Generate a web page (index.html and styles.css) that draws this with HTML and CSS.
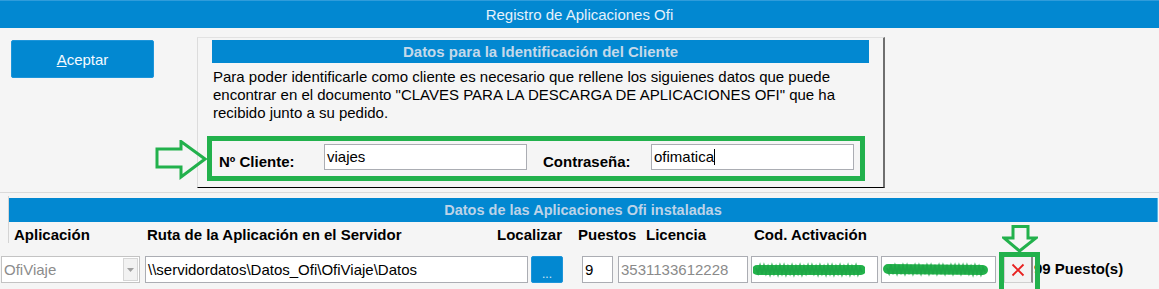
FILE: index.html
```html
<!DOCTYPE html>
<html lang="es">
<head>
<meta charset="utf-8">
<title>Registro de Aplicaciones Ofi</title>
<link rel="stylesheet" href="styles.css">
</head>
<body>
<div class="titlebar">Registro de Aplicaciones Ofi</div>
<div class="top">
  <button class="btn-aceptar"><u>A</u>ceptar</button>
  <div class="panel">
    <div class="panel-head">Datos para la Identificación del Cliente</div>
    <p class="intro">Para poder identificarle como cliente es necesario que rellene los siguienes datos que puede<br>encontrar en el documento "CLAVES PARA LA DESCARGA DE APLICACIONES OFI" que ha<br>recibido junto a su pedido.</p>
    <div class="cred-row">
      <svg class="arrow-right" width="52" height="40" viewBox="0 0 52 40"><polygon points="2,9 26,9 26,1.5 50,19 26,37 26,27 2,27" fill="none" stroke="#22b14c" stroke-width="3" stroke-linejoin="miter"/></svg>
      <span class="lbl lbl-cliente">Nº Cliente:</span>
      <div class="field w203">viajes</div>
      <span class="lbl lbl-pass">Contraseña:</span>
      <div class="field w203">ofimatica<span class="caret"></span></div>
    </div>
  </div>
</div>
<div class="apps">
  <div class="group">
    <div class="apps-head">Datos de las Aplicaciones Ofi instaladas</div>
    <div class="cols">
      <span class="col c-app">Aplicación</span>
      <span class="col c-ruta">Ruta de la Aplicación en el Servidor</span>
      <span class="col c-loc">Localizar</span>
      <span class="col c-pue">Puestos</span>
      <span class="col c-lic">Licencia</span>
      <span class="col c-cod">Cod. Activación</span>
    </div>
  </div>
  <div class="row">
    <div class="combo"><span class="combo-text">OfiViaje</span><span class="combo-btn"><svg width="7" height="4" viewBox="0 0 7 4"><polygon points="0,0 7,0 3.5,4" fill="#a0a0a0"/></svg></span></div>
    <div class="field f-ruta">\\servidordatos\Datos_Ofi\OfiViaje\Datos</div>
    <button class="btn-loc">...</button>
    <div class="field f-pue">9</div>
    <div class="field f-lic gray">3531133612228</div>
    <div class="field f-cod1"><svg class="scribble" width="112" height="16" viewBox="0 0 112 16"><path d="M4,8 L108,8" stroke="#23b24b" stroke-width="10" stroke-linecap="round"/><path d="M3,6 L5,11 L7,4 L9,12 L11,4 L13,11 L15,5 L17,12 L19,4 L21,11 L23,5 L25,12 L27,4 L29,11 L31,4 L33,12 L35,5 L37,11 L39,4 L41,12 L43,5 L45,11 L47,4 L49,12 L51,5 L53,11 L55,4 L57,12 L59,4 L61,11 L63,5 L65,12 L67,4 L69,11 L71,5 L73,12 L75,4 L77,11 L79,4 L81,12 L83,5 L85,11 L87,4 L89,12 L91,5 L93,11 L95,4 L97,12 L99,5 L101,11 L103,4 L105,12 L107,6 L109,10" fill="none" stroke="#1ea646" stroke-width="2"/></svg></div>
    <div class="field f-cod2"><svg class="scribble" width="108" height="16" viewBox="0 0 108 16"><path d="M5,7 L100,8" stroke="#23b24b" stroke-width="10" stroke-linecap="round"/><path d="M4,6 L6,11 L8,3 L10,12 L12,4 L14,11 L16,3 L18,12 L20,4 L22,11 L24,4 L26,12 L28,3 L30,11 L32,4 L34,12 L36,4 L38,11 L40,3 L42,12 L44,4 L46,11 L48,4 L50,12 L52,3 L54,11 L56,4 L58,12 L60,4 L62,11 L64,3 L66,12 L68,4 L70,11 L72,4 L74,12 L76,4 L78,11 L80,4 L82,12 L84,4 L86,11 L88,5 L90,12 L92,4 L94,11 L96,5 L98,12 L100,6 L102,10" fill="none" stroke="#1ea646" stroke-width="2"/></svg></div>
    <div class="del-wrap">
      <button class="btn-del"><svg width="14" height="14" viewBox="0 0 14 14"><path d="M1.5,1.5 L12.5,12.5 M12.5,1.5 L1.5,12.5" stroke="#e8201f" stroke-width="1.8"/></svg></button>
      <svg class="arrow-down" width="36" height="28" viewBox="0 0 36 28"><polygon points="11,1.5 26,1.5 26,13 34,13 17.5,26 2,13 11,13" fill="none" stroke="#22b14c" stroke-width="3"/></svg>
      <div class="mark-box"></div>
    </div>
    <span class="puestos">99 Puesto(s)</span>
  </div>
</div>
</body>
</html>
```

FILE: styles.css
```css
html, body {
  margin: 0;
  padding: 0;
}
body {
  background: #f5f5f5;
  font-family: "Liberation Sans", Arial, sans-serif;
  color: #000;
  width: 1159px;
  height: 289px;
  overflow: hidden;
}
.titlebar {
  box-sizing: border-box;
  height: 28px;
  background: #0288d1;
  border-top: 1px solid #2f9cdb;
  color: #e4f1fb;
  font-size: 15px;
  line-height: 27px;
  text-align: center;
}
.top {
  display: flex;
  align-items: flex-start;
  height: 164px;
}
.btn-aceptar {
  box-sizing: border-box;
  margin: 12px 0 0 11px;
  width: 143px;
  height: 38px;
  background: #0288d1;
  border: 1px solid #1d95da;
  border-radius: 2px;
  color: #f4faff;
  font-family: "Liberation Sans", Arial, sans-serif;
  font-size: 15px;
  padding: 0;
}
.panel {
  box-sizing: border-box;
  margin: 9px 0 0 43px;
  width: 688px;
  height: 151px;
  border-left: 1px solid #dcdcdc;
  border-top: 1px solid #e2e2e2;
  border-right: 2px solid #6f6f6f;
  border-bottom: 1px solid #000;
  padding: 2px 14px 0 14px;
}
.panel-head {
  height: 23px;
  line-height: 23px;
  background: #0288d1;
  color: #c5d9ea;
  font-weight: bold;
  font-size: 15px;
  text-align: center;
}
.intro {
  margin: 5px 0 0 1px;
  font-size: 15px;
  line-height: 18px;
  white-space: nowrap;
}
.cred-row {
  position: relative;
  box-sizing: border-box;
  display: flex;
  align-items: flex-start;
  margin: 14px 0 0 -5px;
  width: 658px;
  height: 45px;
  border: 5px solid #22b14c;
  padding-left: 7px;
}
.arrow-right {
  position: absolute;
  left: -57px;
  top: -1px;
}
.lbl {
  font-weight: bold;
  font-size: 15px;
  line-height: 17px;
  margin-top: 12px;
}
.lbl-cliente { width: 105px; }
.lbl-pass { width: 108px; margin-left: 16px; }
.field {
  box-sizing: border-box;
  height: 26px;
  background: #fff;
  border: 1px solid #abadb3;
  font-size: 15px;
  line-height: 17px;
  padding: 3px 2px 0 2px;
  white-space: nowrap;
  overflow: hidden;
}
.cred-row .field { margin-top: 3px; }
.w203 { width: 203px; }
.caret {
  display: inline-block;
  width: 1px;
  height: 16px;
  background: #000;
  vertical-align: -3px;
}
.apps {
  border-top: 1px solid #dadada;
}
.group {
  margin: 3px 1px 0 8px;
  border-left: 1px solid #d4d4d4;
  padding-top: 2px;
}
.apps-head {
  height: 24px;
  line-height: 24px;
  background: #0288d1;
  border-right: 1px solid #57b3e6;
  color: #bcd3e8;
  font-weight: bold;
  font-size: 14.5px;
  text-align: center;
}
.cols {
  display: flex;
  height: 16px;
  margin-top: 5px;
  padding-left: 5px;
  font-weight: bold;
  font-size: 15px;
  line-height: 16px;
  white-space: nowrap;
}
.c-app { width: 133px; }
.c-ruta { width: 350px; }
.c-loc { width: 81px; }
.c-pue { width: 68px; }
.c-lic { width: 108px; }
.row {
  display: flex;
  align-items: flex-start;
  margin-top: 13px;
  padding-left: 1px;
  height: 40px;
}
.row .field { height: 27px; padding-top: 4px; }
.combo {
  box-sizing: border-box;
  display: flex;
  justify-content: space-between;
  width: 139px;
  height: 27px;
  background: #fff;
  border: 1px solid #c3c3c3;
  padding: 1px 1px 1px 2px;
}
.combo-text {
  color: #8c8c8c;
  font-size: 15px;
  line-height: 17px;
  padding-top: 3px;
}
.combo-btn {
  box-sizing: border-box;
  display: flex;
  align-items: center;
  justify-content: center;
  width: 15px;
  background: #f2f2f2;
  border: 1px solid #d6d6d6;
}
.f-ruta { width: 383px; margin-left: 5px; }
.btn-loc {
  box-sizing: border-box;
  width: 32px;
  height: 27px;
  margin-left: 3px;
  background: #0288d1;
  border: 1px solid #1d95da;
  border-radius: 2px;
  color: #d5e9f7;
  font-family: "Liberation Sans", Arial, sans-serif;
  font-size: 12px;
  line-height: 12px;
  padding: 8px 0 0 0;
}
.f-pue { width: 31px; margin-left: 19px; }
.f-lic { width: 130px; margin-left: 5px; }
.gray { color: #8a8a8a; }
.f-cod1 { width: 127px; margin-left: 3px; }
.f-cod2 { width: 115px; margin-left: 3px; }
.row .f-cod1, .row .f-cod2 { padding: 0; }
.scribble { display: block; margin: 5px 0 0 1px; }
.del-wrap {
  position: relative;
  margin-left: 8px;
  width: 29px;
  height: 27px;
}
.btn-del {
  box-sizing: border-box;
  display: flex;
  align-items: center;
  justify-content: center;
  width: 29px;
  height: 27px;
  background: #f3f3f3;
  border: 1px solid #d0d0d0;
  border-right: 2px solid #8a8a8a;
  padding: 0;
}
.arrow-down {
  position: absolute;
  left: -2px;
  top: -31px;
}
.mark-box {
  position: absolute;
  left: -5px;
  top: -4px;
  width: 31px;
  height: 32px;
  border: 5px solid #22b14c;
}
.puestos {
  margin-left: 1px;
  font-weight: bold;
  font-size: 15px;
  line-height: 17px;
  padding-top: 4px;
}
```
